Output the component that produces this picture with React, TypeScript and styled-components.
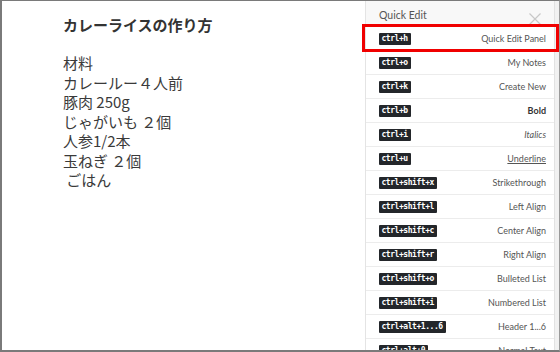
import React from "react";
import styled, { createGlobalStyle, css } from "styled-components";

const Global = createGlobalStyle`
  html, body { margin: 0; padding: 0; background: #fff; }
  #root { width: 560px; height: 352px; }
`;

const Frame = styled.div`
  box-sizing: border-box;
  width: 560px;
  height: 352px;
  border-top: 1px solid #7a7a7a;
  border-left: 2px solid #7a7a7a;
  border-bottom: 2px solid #7a7a7a;
  border-right: 1px solid #9a9a9a;
  display: flex;
  overflow: hidden;
  background: #fff;
`;

const Editor = styled.div`
  flex: 1;
  padding: 13px 0 0 61px;
  font-family: "Noto Sans CJK JP", "Noto Sans", sans-serif;
  color: #333;
`;

const Title = styled.h1`
  margin: 0 0 17px 0;
  font-size: 15px;
  line-height: 22px;
  font-weight: 700;
  color: #333;
`;

const Line = styled.div`
  font-size: 15px;
  line-height: 19.5px;
  color: #3a3a3a;
  white-space: pre;
`;

const Panel = styled.div`
  width: 188px;
  flex-shrink: 0;
  border-left: 1px solid #e4e4e4;
  display: flex;
  flex-direction: column;
  font-family: Lato, "Open Sans", sans-serif;
  position: relative;
`;

const Header = styled.div`
  box-sizing: border-box;
  flex-shrink: 0;
  height: 26px;
  display: flex;
  align-items: center;
  justify-content: space-between;
  padding: 2px 13px 0 13px;
  background: #f8f8f8;
  color: #555;
  font-size: 10.5px;
`;

const Close = styled.svg`
  width: 12px;
  height: 12px;
  margin-top: 8px;
`;

const List = styled.div`
  display: flex;
  flex-direction: column;
  flex-shrink: 0;
`;

const Row = styled.div<{ $hl?: boolean }>`
  box-sizing: border-box;
  flex-shrink: 0;
  height: 24px;
  display: flex;
  align-items: center;
  justify-content: space-between;
  padding: 0 8px 0 13px;
  border-bottom: 1px solid #ececec;
  position: relative;
  ${(p) =>
    p.$hl &&
    css`
      &::after {
        content: "";
        position: absolute;
        left: -4px;
        right: -5px;
        top: -3px;
        bottom: -2px;
        border: 3.5px solid #f00000;
      }
    `}
`;

const Kbd = styled.span`
  background: #23262a;
  color: #fff;
  font-family: "DejaVu Sans Mono", "Liberation Mono", monospace;
  font-weight: 700;
  font-size: 8px;
  letter-spacing: -0.45px;
  line-height: 12px;
  height: 12px;
  padding: 0 3px 0 2.5px;
  border-radius: 1px;
`;

const Label = styled.span<{ $kind?: string }>`
  font-size: 9px;
  color: #555;
  ${(p) => p.$kind === "bold" && css`font-weight: 700; color: #333;`}
  ${(p) => p.$kind === "italic" && css`font-style: italic;`}
  ${(p) => p.$kind === "underline" && css`text-decoration: underline;`}
`;

const Scroll = styled.div`
  width: 4px;
  flex-shrink: 0;
  background: #f1f1f1;
  border-left: 1px solid #e2e2e2;
`;

const rows: { k: string; l: string; kind?: string; hl?: boolean }[] = [
  { k: "ctrl+h", l: "Quick Edit Panel", hl: true },
  { k: "ctrl+o", l: "My Notes" },
  { k: "ctrl+k", l: "Create New" },
  { k: "ctrl+b", l: "Bold", kind: "bold" },
  { k: "ctrl+i", l: "Italics", kind: "italic" },
  { k: "ctrl+u", l: "Underline", kind: "underline" },
  { k: "ctrl+shift+x", l: "Strikethrough" },
  { k: "ctrl+shift+l", l: "Left Align" },
  { k: "ctrl+shift+c", l: "Center Align" },
  { k: "ctrl+shift+r", l: "Right Align" },
  { k: "ctrl+shift+o", l: "Bulleted List" },
  { k: "ctrl+shift+i", l: "Numbered List" },
  { k: "ctrl+alt+1...6", l: "Header 1...6" },
  { k: "ctrl+alt+0", l: "Normal Text" },
];

const lines = ["材料", "カレールー４人前", "豚肉 250g", "じゃがいも ２個", "人参1/2本", "玉ねぎ ２個", " ごはん"];

export default function App() {
  return (
    <>
      <Global />
      <Frame>
        <Editor>
          <Title>カレーライスの作り方</Title>
          {lines.map((t, i) => (
            <Line key={i}>{t}</Line>
          ))}
        </Editor>
        <Panel>
          <Header>
            <span>Quick Edit</span>
            <Close viewBox="0 0 12 12">
              <path d="M0.5 0.5 L11.5 11.5 M11.5 0.5 L0.5 11.5" stroke="#c8c8c8" strokeWidth="1.2" fill="none" />
            </Close>
          </Header>
          <List>
            {rows.map((r) => (
              <Row key={r.k} $hl={r.hl}>
                <Kbd>{r.k}</Kbd>
                <Label $kind={r.kind}>{r.l}</Label>
              </Row>
            ))}
          </List>
        </Panel>
        <Scroll />
      </Frame>
    </>
  );
}
